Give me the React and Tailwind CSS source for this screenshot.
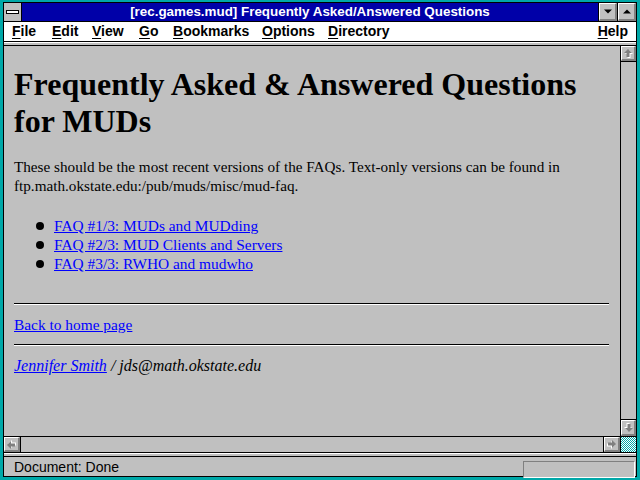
import React from "react";

const ArrowIcon = ({ dir }) => {
  const rot = { up: 0, right: 90, down: 180, left: 270 }[dir];
  return (
    <svg width="11" height="11" viewBox="0 0 11 11">
      <g transform={`rotate(${rot} 5.5 5.5)`}>
        <polygon points="6,2 10,6 7.5,6 7.5,10 4.5,10 4.5,6 2,6" fill="#ffffff" />
        <polygon points="5,1 9,5 6.5,5 6.5,9 3.5,9 3.5,5 1,5" fill="#808080" />
      </g>
    </svg>
  );
};

const ScrollBtn = ({ dir, className = "" }) => (
  <div
    className={`flex items-center justify-center bg-[#c0c0c0] border-t border-l border-t-white border-l-white border-b-2 border-r-2 border-b-[#808080] border-r-[#808080] ${className}`}
  >
    <ArrowIcon dir={dir} />
  </div>
);

const TitleBtn = ({ up }) => (
  <div className="w-[19px] h-full flex items-center justify-center bg-[#c0c0c0] border-l border-black">
    <div className="w-full h-full flex items-center justify-center border-t border-l border-t-white border-l-white border-b-2 border-r-2 border-b-[#808080] border-r-[#808080]">
      <svg width="8" height="5" viewBox="0 0 8 5">
        {up ? (
          <polygon points="0,4.5 4,0.5 8,4.5" fill="#000" />
        ) : (
          <polygon points="0,0.5 4,4.5 8,0.5" fill="#000" />
        )}
      </svg>
    </div>
  </div>
);

const menus = [
  { label: "File", w: "w-[40px]" },
  { label: "Edit", w: "w-[40px]" },
  { label: "View", w: "w-[47px]" },
  { label: "Go", w: "w-[34px]" },
  { label: "Bookmarks", w: "w-[89px]" },
  { label: "Options", w: "w-[66px]" },
  { label: "Directory", w: "w-[90px]" },
];

const faqs = [
  "FAQ #1/3: MUDs and MUDding",
  "FAQ #2/3: MUD Clients and Servers",
  "FAQ #3/3: RWHO and mudwho",
];

const Hr = () => (
  <div className="w-full border-t border-t-black border-b border-b-white" />
);

export default function App() {
  return (
    <div className="w-[640px] h-[480px] bg-[#00a8a8] pt-[2px] pl-[3px] pr-[3px] pb-[3px] overflow-hidden">
      <div className="h-[475px] border border-black flex flex-col bg-[#c0c0c0] font-['Liberation_Sans',Arial,sans-serif]">
        {/* Title bar */}
        <div className="h-[19px] shrink-0 flex border-b border-black">
          <div className="w-[18px] h-full flex items-center justify-center bg-[#c0c0c0] border-r border-black">
            <div className="w-[13px] h-[4px] bg-white border border-black" />
          </div>
          <div className="flex-1 bg-[#0000a8] text-white font-bold text-[13.4px] leading-[18px] text-center truncate">
            [rec.games.mud] Frequently Asked/Answered Questions
          </div>
          <TitleBtn />
          <TitleBtn up />
        </div>

        {/* Menu bar */}
        <div className="h-[20px] shrink-0 flex items-center bg-white border-b border-black pl-[8px] pr-[8px] text-[14px] font-bold text-black">
          {menus.map((m) => (
            <div key={m.label} className={m.w}>
              <span className="underline underline-offset-2">{m.label[0]}</span>
              {m.label.slice(1)}
            </div>
          ))}
          <div className="ml-auto">
            <span className="underline underline-offset-2">H</span>elp
          </div>
        </div>

        {/* separator */}
        <div className="h-[4px] shrink-0 border-t border-white bg-[#c0c0c0] border-b border-b-black" />

        {/* Content + vertical scrollbar */}
        <div className="h-[390px] shrink-0 flex">
          <div className="flex-1 overflow-hidden pl-[10px] pr-[11px] pt-[20px] font-['Liberation_Serif','Times_New_Roman',serif] text-black">
            <h1 className="text-[32px] leading-[37px] font-bold">
              Frequently Asked &amp; Answered Questions for MUDs
            </h1>
            <p className="mt-[17px] text-[15.2px] leading-[19px]">
              These should be the most recent versions of the FAQs. Text-only versions can be found in
              ftp.math.okstate.edu:/pub/muds/misc/mud-faq.
            </p>
            <ul className="mt-[21px] text-[15.4px] leading-[19px]">
              {faqs.map((f) => (
                <li key={f} className="flex items-center">
                  <span className="w-[8px] h-[8px] rounded-full bg-black ml-[22px] mr-[10px]" />
                  <a href="#" className="text-[#0000ff] underline">
                    {f}
                  </a>
                </li>
              ))}
            </ul>
            <div className="mt-[30px]">
              <Hr />
            </div>
            <p className="mt-[10px] text-[15.4px] leading-[19px]">
              <a href="#" className="text-[#0000ff] underline">
                Back to home page
              </a>
            </p>
            <div className="mt-[10px]">
              <Hr />
            </div>
            <p className="mt-[10px] text-[16px] leading-[19px] italic">
              <a href="#" className="text-[#0000ff] underline">
                Jennifer Smith
              </a>{" "}
              / jds@math.okstate.edu
            </p>
          </div>
          <div className="w-[16px] border-l border-black flex flex-col justify-between">
            <div className="border-b border-black">
              <ScrollBtn dir="up" className="h-[15px]" />
            </div>
            <div className="border-t border-black">
              <ScrollBtn dir="down" className="h-[16px]" />
            </div>
          </div>
        </div>

        {/* Horizontal scrollbar */}
        <div className="h-[17px] shrink-0 flex border-t border-b border-black">
          <div className="border-r border-black">
            <ScrollBtn dir="left" className="w-[16px] h-full" />
          </div>
          <div className="flex-1" />
          <div className="border-l border-black">
            <ScrollBtn dir="right" className="w-[16px] h-full" />
          </div>
          <div className="w-[16px] border-l border-black">
            <svg width="15" height="15">
              <defs>
                <pattern id="chk" width="2" height="2" patternUnits="userSpaceOnUse">
                  <rect width="2" height="2" fill="#ffffff" />
                  <rect width="1" height="1" fill="#00a8a8" />
                  <rect x="1" y="1" width="1" height="1" fill="#00a8a8" />
                </pattern>
              </defs>
              <rect width="15" height="15" fill="url(#chk)" />
            </svg>
          </div>
        </div>

        {/* separator */}
        <div className="h-[4px] shrink-0 border-t border-white bg-[#c0c0c0] border-b border-b-black" />

        {/* Status bar */}
        <div className="flex-1 flex items-center pl-[10px] pr-[1px] text-[14px] text-black">
          <span>Document: Done</span>
          <div className="ml-auto self-end w-[112px] h-[17px] bg-[#c0c0c0] border-t border-l border-[#808080] border-b border-r border-b-white border-r-white" />
        </div>
      </div>
    </div>
  );
}
